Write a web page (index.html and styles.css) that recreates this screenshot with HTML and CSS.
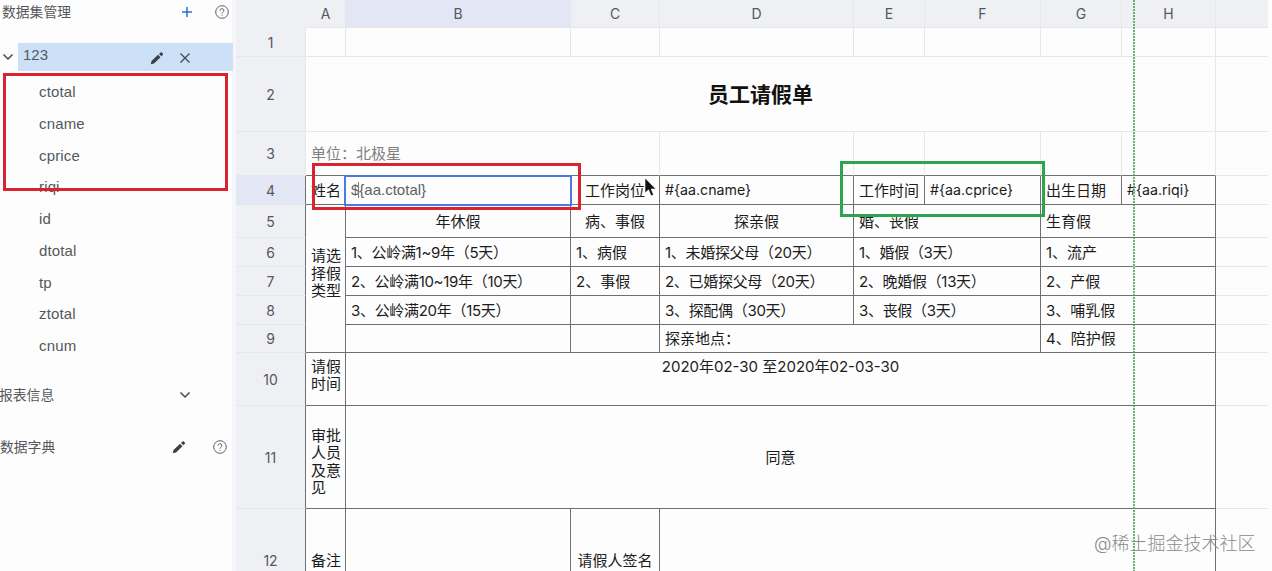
FILE: index.html
```html
<!DOCTYPE html>
<html lang="zh-CN">
<head>
  <meta charset="UTF-8">
  <meta name="viewport" content="width=device-width, initial-scale=1.0">
  <title>员工请假单</title>
  <link rel="stylesheet" href="styles.css">
</head>
<body>
  <div class="designer">
    <aside class="sidebar">
      <div class="panel-title dataset-title">
        <span class="panel-name">数据集管理</span>
        <svg class="icon icon-plus" viewBox="0 0 12 12"><path d="M6 1v10M1 6h10"/></svg>
        <svg class="icon icon-help" viewBox="0 0 14 14"><circle cx="7" cy="7" r="6.3"/><path d="M5.1 5.6a1.9 1.9 0 1 1 2.8 1.6c-.6.4-.9.7-.9 1.4M7 9.7v1"/></svg>
      </div>
      <div class="dataset">
        <svg class="icon icon-arrow" viewBox="0 0 12 12"><path d="M1.5 3.5L6 8l4.5-4.5"/></svg>
        <div class="dataset-name">
          <span class="panel-name">123</span>
          <svg class="icon icon-pencil" viewBox="0 0 14 14"><path d="M.8 13.2l.7-3.3 6.6-6.2 2.4 2.5-6.5 6.3zM9 2.9l1.5-1.4q.7-.6 1.3 0l1 1q.6.7 0 1.3l-1.4 1.5z"/></svg>
          <svg class="icon icon-close" viewBox="0 0 12 12"><path d="M1.5 1.5l9 9M10.5 1.5l-9 9"/></svg>
        </div>
      </div>
      <ul class="field-list">
        <li>ctotal</li>
        <li>cname</li>
        <li>cprice</li>
        <li>riqi</li>
        <li>id</li>
        <li>dtotal</li>
        <li>tp</li>
        <li>ztotal</li>
        <li>cnum</li>
      </ul>
      <div class="panel-title info-title">
        <span class="panel-name">报表信息</span>
        <svg class="icon icon-arrow" viewBox="0 0 12 12"><path d="M1.5 3.5L6 8l4.5-4.5"/></svg>
      </div>
      <div class="panel-title dict-title">
        <span class="panel-name">数据字典</span>
        <svg class="icon icon-pencil" viewBox="0 0 14 14"><path d="M.8 13.2l.7-3.3 6.6-6.2 2.4 2.5-6.5 6.3zM9 2.9l1.5-1.4q.7-.6 1.3 0l1 1q.6.7 0 1.3l-1.4 1.5z"/></svg>
        <svg class="icon icon-help" viewBox="0 0 14 14"><circle cx="7" cy="7" r="6.3"/><path d="M5.1 5.6a1.9 1.9 0 1 1 2.8 1.6c-.6.4-.9.7-.9 1.4M7 9.7v1"/></svg>
      </div>
    </aside>

    <main class="sheet">
      <!-- 列头 -->
      <div class="head corner"></div>
      <div class="head col">A</div>
      <div class="head col selected">B</div>
      <div class="head col">C</div>
      <div class="head col">D</div>
      <div class="head col">E</div>
      <div class="head col">F</div>
      <div class="head col">G</div>
      <div class="head col">H</div>
      <div class="head col last"></div>

      <div class="head row">1</div>
      <div class="cell"></div>
      <div class="cell"></div>
      <div class="cell"></div>
      <div class="cell"></div>
      <div class="cell"></div>
      <div class="cell"></div>
      <div class="cell"></div>
      <div class="cell"></div>
      <div class="cell last"></div>

      <div class="head row">2</div>
      <div class="cell span-8 form-title">员工请假单</div>
      <div class="cell last"></div>

      <div class="head row">3</div>
      <div class="cell span-3 above unit">单位：北极星</div>
      <div class="cell above"></div>
      <div class="cell above"></div>
      <div class="cell above"></div>
      <div class="cell above"></div>
      <div class="cell above"></div>
      <div class="cell last"></div>

      <div class="head row selected beside">4</div>
      <div class="cell line">姓名</div>
      <div class="cell line editing">
        <div class="editor">$<i class="caret"></i>{aa.ctotal}</div>
      </div>
      <div class="cell line center">工作岗位</div>
      <div class="cell line field">#{aa.cname}</div>
      <div class="cell line">工作时间</div>
      <div class="cell line field">#{aa.cprice}</div>
      <div class="cell line">出生日期</div>
      <div class="cell line field">#{aa.riqi}</div>
      <div class="cell last"></div>

      <div class="head row beside">5</div>
      <div class="cell line rows-5">请选<br>择假<br>类型</div>
      <div class="cell line center">年休假</div>
      <div class="cell line center">病、事假</div>
      <div class="cell line center">探亲假</div>
      <div class="cell line span-2">婚、丧假</div>
      <div class="cell line span-2">生育假</div>
      <div class="cell last"></div>

      <div class="head row beside">6</div>
      <div class="cell line item">1、公岭满1~9年（5天）</div>
      <div class="cell line">1、病假</div>
      <div class="cell line item">1、未婚探父母（20天）</div>
      <div class="cell line item span-2">1、婚假（3天）</div>
      <div class="cell line span-2">1、流产</div>
      <div class="cell last"></div>

      <div class="head row beside">7</div>
      <div class="cell line item">2、公岭满10~19年（10天）</div>
      <div class="cell line">2、事假</div>
      <div class="cell line item">2、已婚探父母（20天）</div>
      <div class="cell line item span-2">2、晚婚假（13天）</div>
      <div class="cell line span-2">2、产假</div>
      <div class="cell last"></div>

      <div class="head row beside">8</div>
      <div class="cell line item">3、公岭满20年（15天）</div>
      <div class="cell line"></div>
      <div class="cell line item">3、探配偶（30天）</div>
      <div class="cell line item span-2">3、丧假（3天）</div>
      <div class="cell line span-2">3、哺乳假</div>
      <div class="cell last"></div>

      <div class="head row beside">9</div>
      <div class="cell line"></div>
      <div class="cell line"></div>
      <div class="cell line span-3">探亲地点：</div>
      <div class="cell line span-2">4、陪护假</div>
      <div class="cell last"></div>

      <div class="head row beside">10</div>
      <div class="cell line leave-time">请假<br>时间</div>
      <div class="cell line span-7 center top">2020年02-30 至2020年02-03-30</div>
      <div class="cell last"></div>

      <div class="head row beside">11</div>
      <div class="cell line approval">审批<br>人员<br>及意<br>见</div>
      <div class="cell line span-7 center">同意</div>
      <div class="cell last"></div>

      <div class="head row beside">12</div>
      <div class="cell line">备注</div>
      <div class="cell line"></div>
      <div class="cell line center">请假人签名</div>
      <div class="cell line span-5"></div>
      <div class="cell last"></div>
    </main>

    <!-- 分页线、标注框、鼠标 -->
    <div class="page-line"></div>
    <div class="mark mark-fields"></div>
    <div class="mark mark-single"></div>
    <div class="mark mark-list"></div>
    <svg class="cursor" viewBox="0 0 12 20"><path d="M1 1v15l3.5-3.2 2.6 6 2.5-1-2.5-5.800h4.700z"/></svg>
    <div class="watermark">@稀土掘金技术社区</div>
  </div>
</body>
</html>
```

FILE: styles.css
```css
* {
  box-sizing: border-box;
}
body {
  margin: 0;
  background-color: #fdfdfd;
  font-family: Inter, "Noto Sans CJK SC", sans-serif;
}
.designer {
  position: relative;
  display: flex;
  width: 1272px;
  height: 571px;
  overflow: hidden;
}

/* 左侧面板 */
.sidebar {
  flex: none;
  width: 236px;
  height: 571px;
  border-right: 4px solid #f5f6f9;
  color: #55585c;
  font-family: "Liberation Sans", "Noto Sans CJK SC", sans-serif;
}
.panel-title {
  display: flex;
  align-items: center;
  height: 24px;
  font-size: 13.8px;
}
.panel-name {
  flex: 1;
}
.panel-title .panel-name {
  padding-bottom: 2px;
}
.dataset-title {
  padding: 0 3px 0 2px;
}
.info-title {
  margin-top: 21px;
  padding-right: 41px;
}
.dict-title {
  margin-top: 28px;
  padding-right: 5px;
}
.info-title .panel-name {
  margin-left: -1px;
}
.dataset {
  display: flex;
  align-items: center;
  height: 28px;
  margin-top: 19px;
  padding-left: 2px;
}
.dataset-name {
  display: flex;
  align-items: center;
  flex: 1;
  height: 28px;
  margin: 0 -1px 0 4px;
  padding: 0 42px 0 5px;
  background-color: #cce0f7;
  font-size: 15px;
}
.dataset-name .panel-name {
  padding-bottom: 5px;
}
.field-list {
  margin: 5px 0 0;
  padding: 0 0 0 39px;
  list-style: none;
  font-size: 15px;
  letter-spacing: .15px;
}
.field-list li {
  height: 31.75px;
  line-height: 32.5px;
}

.icon {
  flex: none;
  width: 12px;
  height: 12px;
  fill: none;
  stroke: #45484c;
  stroke-width: 1.5;
}
.icon-plus {
  margin-right: 22px;
  stroke: #2f6fd6;
}
.icon-help {
  width: 14px;
  height: 14px;
  stroke: #606266;
  stroke-width: 1;
}
.icon-pencil {
  width: 14px;
  height: 14px;
  fill: #3c4045;
  stroke: none;
}
.dataset-name .icon-pencil {
  margin: 2px 15px 0 0;
}
.dict-title .icon-pencil {
  margin-right: 27px;
}
.icon-close {
  margin-top: 2px;
  stroke-width: 1.3;
}

/* 表格 */
.sheet {
  display: grid;
  grid-template-columns: 70px 40px 225px 89px 194px 71px 116px 81px 94px 52px;
  grid-template-rows: 28px 29px 75px 44px 29px 33px 29px 29px 29px 28px 53px 103px 104px;
  width: 1032px;
  height: 571px;
}
.head,
.cell {
  display: flex;
  align-items: center;
  min-width: 0;
  border-right: 1px solid #e6e7ea;
  border-bottom: 1px solid #e6e7ea;
}
.head {
  justify-content: center;
  background-color: #eff0f4;
  color: #55585c;
  font-size: 14px;
}
.head.selected {
  background-color: #e2e6f5;
}
.corner {
  border-color: #eff0f4;
}
.cell {
  padding-top: 1px;
  padding-left: 5px;
  color: #1c1c1c;
  font-size: 15px;
  line-height: 17.5px;
  white-space: nowrap;
}
.last {
  border-right: none;
}
.line {
  border-color: #707070;
}
.above {
  border-bottom-color: #707070;
}
.beside {
  border-right-color: #707070;
}
.center {
  justify-content: center;
  padding-left: 0;
}
.item {
  letter-spacing: -.3px;
}
.field {
  padding-top: 0;
  font-size: 14.2px;
}
.top {
  align-items: flex-start;
  padding-top: 5px;
}
.span-2 {
  grid-column: span 2;
}
.span-3 {
  grid-column: span 3;
}
.span-5 {
  grid-column: span 5;
}
.span-7 {
  grid-column: span 7;
}
.span-8 {
  grid-column: span 8;
}
.rows-5 {
  grid-row: span 5;
  padding-bottom: 11px;
}
.leave-time {
  padding-bottom: 9px;
}
.approval {
  padding-top: 9px;
}
.form-title {
  justify-content: center;
  padding-top: 2px;
  padding-left: 0;
  color: #111;
  font-size: 21px;
  font-weight: bold;
}
.unit {
  color: #808080;
}
.editing {
  position: relative;
}
.editor {
  position: absolute;
  top: -1px;
  left: -2px;
  display: flex;
  align-items: center;
  width: 228px;
  height: 31px;
  padding: 0 0 2px 5px;
  border: 2px solid #4a7be0;
  background-color: #fdfdfd;
  color: #606060;
  font-family: "Liberation Sans", sans-serif;
}
.caret {
  width: 1px;
  height: 16px;
  margin: 0 0 0 -1px;
  background-color: #777;
}

.page-line {
  position: absolute;
  top: 0;
  left: 1133px;
  width: 2px;
  height: 571px;
  background: repeating-linear-gradient(#4f9c58 0, #4f9c58 2px, #e3f1e4 2px, #e3f1e4 3px);
  opacity: .8;
}
.mark {
  position: absolute;
  border: 3px solid #d9232e;
}
.mark-fields {
  top: 73px;
  left: 3px;
  width: 225px;
  height: 118px;
}
.mark-single {
  top: 163px;
  left: 312px;
  width: 269px;
  height: 47px;
}
.mark-list {
  top: 161px;
  left: 840px;
  width: 205px;
  height: 56px;
  border-color: #2da44e;
}
.cursor {
  position: absolute;
  top: 177px;
  left: 644px;
  width: 12px;
  height: 20px;
  fill: #111;
  stroke: #fff;
  stroke-width: .6;
}
.watermark {
  position: absolute;
  top: 531px;
  left: 1094px;
  color: #8a8a8a;
  font-size: 18px;
  font-weight: 300;
  line-height: 26px;
  white-space: nowrap;
}
```
